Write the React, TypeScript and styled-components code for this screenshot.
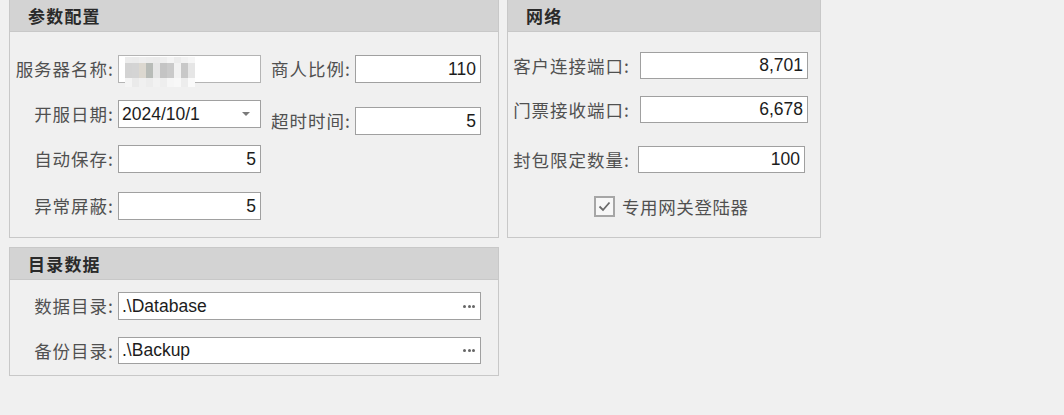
import React from 'react';
import styled, { createGlobalStyle } from 'styled-components';

const GlobalStyle = createGlobalStyle`
  html, body {
    margin: 0;
    padding: 0;
    background: #f0f0f0;
  }
  body {
    font-family: "Noto Sans CJK SC", "Noto Sans", sans-serif;
  }
`;

const Page = styled.div`
  width: 1064px;
  height: 415px;
  overflow: hidden;
  background: #f0f0f0;
`;

const Grid = styled.div`
  display: grid;
  grid-template-columns: 490px 314px;
  column-gap: 8px;
  row-gap: 9px;
  align-items: start;
  margin-top: -1px;
  padding-left: 9px;
`;

const Panel = styled.section`
  box-sizing: border-box;
  border: 1px solid #c8c8c8;
  background: #f0f0f0;
`;

const PanelHeader = styled.div`
  height: 31px;
  border-bottom: 1px solid #c8c8c8;
  background: #d3d3d3;
  display: flex;
  align-items: center;
  padding-left: 18px;
  font-size: 17px;
  font-weight: 700;
  letter-spacing: 1.2px;
  color: #2a2a2a;
`;

const PanelBody = styled.div<{ $h: number; $dir?: string }>`
  height: ${(p) => p.$h}px;
  display: flex;
  flex-direction: ${(p) => p.$dir || 'row'};
  align-items: flex-start;
`;

const Column = styled.div<{ $left?: number }>`
  display: flex;
  flex-direction: column;
  margin-left: ${(p) => p.$left || 0}px;
`;

const Row = styled.div<{ $top: number; $h?: number }>`
  display: flex;
  align-items: center;
  height: ${(p) => p.$h || 28}px;
  margin-top: ${(p) => p.$top}px;
`;

const Label = styled.label<{ $w: number }>`
  width: ${(p) => p.$w}px;
  flex: none;
  text-align: right;
  font-size: 17.5px;
  letter-spacing: 1px;
  color: #505050;
  white-space: nowrap;
  line-height: 1;
`;

const Field = styled.div<{ $w: number; $gap: number; $align?: string; $soft?: boolean }>`
  box-sizing: border-box;
  position: relative;
  width: ${(p) => p.$w}px;
  height: 100%;
  margin-left: ${(p) => p.$gap}px;
  border: 1px solid ${(p) => (p.$soft ? '#b4b4b4' : '#a0a0a0')};
  background: #ffffff;
  display: flex;
  align-items: center;
  justify-content: ${(p) => (p.$align === 'left' ? 'flex-start' : 'flex-end')};
  padding: 0 4px 0 3px;
  font-family: "Liberation Sans", Arial, sans-serif;
  font-size: 17.5px;
  color: #1c1c1c;
`;

const FieldText = styled.span`
  flex: 1;
`;

const Arrow = styled.span`
  width: 0;
  height: 0;
  margin-right: 6px;
  border-left: 4px solid transparent;
  border-right: 4px solid transparent;
  border-top: 4px solid #7a7a7a;
`;

const Dots = styled.span`
  display: flex;
  gap: 1.5px;
  margin-right: 1px;
`;

const Dot = styled.i`
  width: 3px;
  height: 3px;
  border-radius: 50%;
  background: #666;
`;

/* blurred-out server name */
const Mosaic = styled.div`
  display: grid;
  grid-template-columns: repeat(10, 7px);
  grid-template-rows: 6px 15px 9px;
  margin-left: 3px;
  margin-top: 1px;
  align-self: flex-start;
`;

const Cell = styled.i<{ $c: string }>`
  background: ${(p) => p.$c};
`;

const CheckRow = styled.div`
  display: flex;
  align-items: center;
  margin-top: 21px;
  padding-left: 86px;
`;

const Box = styled.span`
  box-sizing: border-box;
  width: 21px;
  height: 21px;
  border: 2px solid #a6a6a6;
  background: #f7f7f7;
  display: flex;
  align-items: center;
  justify-content: center;
`;

const CheckText = styled.span`
  margin-left: 7px;
  font-size: 17.5px;
  letter-spacing: 0.6px;
  color: #505050;
`;

const mosaicColors = [
  '#ececec', '#ebebeb', '#eeeeee', '#ececec', '#ebebeb', '#eeeeee', '#f4f4f4', '#ececec', '#f2f2f2', '#f6f6f6',
  '#d3d3d3', '#d4d4d4', '#dcd8d0', '#b8bcb8', '#e6e6e6', '#c4c4c4', '#cacaca', '#f2f2f2', '#c8c8c8', '#e6e6e6',
  '#f4f4f4', '#eaeaea', '#f0f0f0', '#ececec', '#f2f2f2', '#eeeeee', '#f6f6f6', '#f8f8f8', '#ededed', '#fafafa',
];

const Ellipsis = () => (
  <Dots>
    <Dot />
    <Dot />
    <Dot />
  </Dots>
);

export default function App() {
  return (
    <Page>
      <GlobalStyle />
      <Grid>
        <Panel>
          <PanelHeader>参数配置</PanelHeader>
          <PanelBody $h={205}>
            <Column $left={0}>
              <Row $top={23}>
                <Label $w={104}>服务器名称:</Label>
                <Field $w={143} $gap={4} $soft $align="left">
                  <Mosaic>
                    {mosaicColors.map((c, i) => (
                      <Cell key={i} $c={c} />
                    ))}
                  </Mosaic>
                </Field>
              </Row>
              <Row $top={17}>
                <Label $w={104}>开服日期:</Label>
                <Field $w={143} $gap={4} $align="left">
                  <FieldText>2024/10/1</FieldText>
                  <Arrow />
                </Field>
              </Row>
              <Row $top={17}>
                <Label $w={104}>自动保存:</Label>
                <Field $w={143} $gap={4}>5</Field>
              </Row>
              <Row $top={19}>
                <Label $w={104}>异常屏蔽:</Label>
                <Field $w={143} $gap={4}>5</Field>
              </Row>
            </Column>
            <Column $left={10}>
              <Row $top={23}>
                <Label $w={79}>商人比例:</Label>
                <Field $w={126} $gap={5}>110</Field>
              </Row>
              <Row $top={24}>
                <Label $w={79}>超时时间:</Label>
                <Field $w={126} $gap={5}>5</Field>
              </Row>
            </Column>
          </PanelBody>
        </Panel>

        <Panel>
          <PanelHeader>网络</PanelHeader>
          <PanelBody $h={205} $dir="column">
            <Row $top={20} $h={27}>
              <Label $w={122}>客户连接端口:</Label>
              <Field $w={168} $gap={10}>8,701</Field>
            </Row>
            <Row $top={17} $h={27}>
              <Label $w={122}>门票接收端口:</Label>
              <Field $w={168} $gap={10}>6,678</Field>
            </Row>
            <Row $top={23} $h={27}>
              <Label $w={122}>封包限定数量:</Label>
              <Field $w={167} $gap={8}>100</Field>
            </Row>
            <CheckRow>
              <Box>
                <svg width="13" height="11" viewBox="0 0 13 11">
                  <polyline points="1.5,5.5 5,9 11.5,1.5" fill="none" stroke="#6a6a6a" strokeWidth="1.8" />
                </svg>
              </Box>
              <CheckText>专用网关登陆器</CheckText>
            </CheckRow>
          </PanelBody>
        </Panel>

        <Panel>
          <PanelHeader>目录数据</PanelHeader>
          <PanelBody $h={95} $dir="column">
            <Row $top={12}>
              <Label $w={104}>数据目录:</Label>
              <Field $w={363} $gap={4} $align="left">
                <FieldText>.\Database</FieldText>
                <Ellipsis />
              </Field>
            </Row>
            <Row $top={17} $h={27}>
              <Label $w={104}>备份目录:</Label>
              <Field $w={363} $gap={4} $align="left">
                <FieldText>.\Backup</FieldText>
                <Ellipsis />
              </Field>
            </Row>
          </PanelBody>
        </Panel>
      </Grid>
    </Page>
  );
}
